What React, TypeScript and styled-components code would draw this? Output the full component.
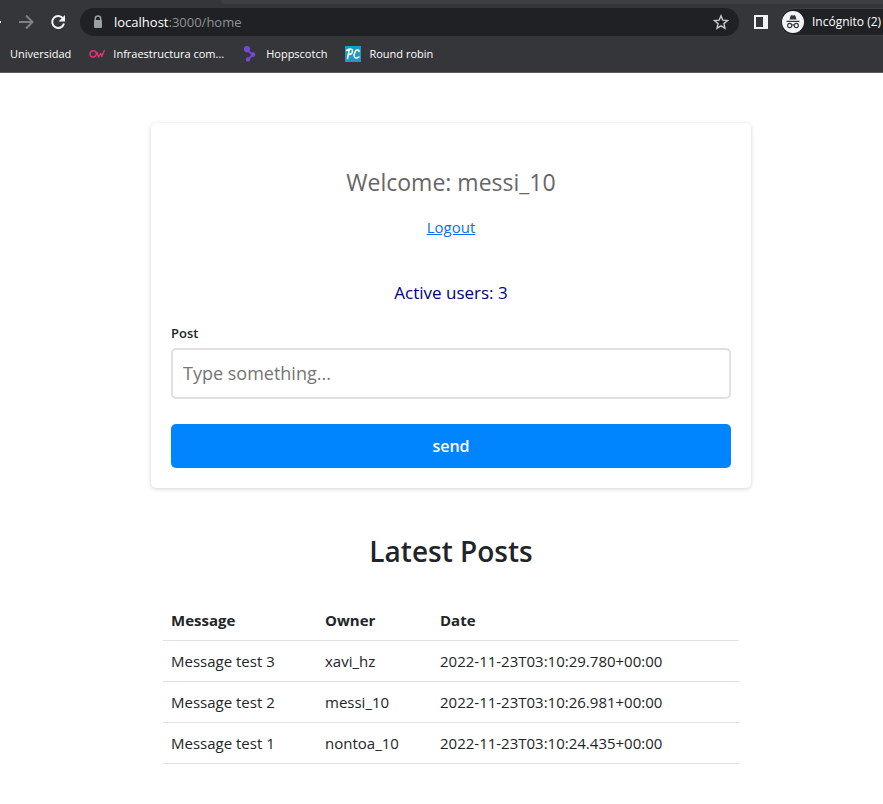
import React from "react";
import styled, { createGlobalStyle } from "styled-components";

const uiFont = `"Segoe UI", "Open Sans", "Noto Sans", sans-serif`;

const GlobalStyle = createGlobalStyle`
  *, *::before, *::after { box-sizing: border-box; }
  body {
    margin: 0;
    background: #fff;
    color: #212529;
    font-family: ${uiFont};
    font-size: 15px;
    line-height: 24px;
    overflow-x: hidden;
  }
`;

/* ---------- browser chrome ---------- */

const Chrome = styled.header`
  background: #35363a;
  border-bottom: 1px solid #5c5d60;
  overflow: hidden;
`;

const TabStrip = styled.div`
  height: 4px;
  margin-left: 221px;
  background: #3c4043;
  border-bottom-left-radius: 4px;
`;

const Toolbar = styled.div`
  display: flex;
  align-items: center;
  height: 36px;
`;

const IconButton = styled.button<{ $w: number; $color?: string }>`
  display: flex;
  flex: none;
  align-items: center;
  justify-content: center;
  width: ${(p) => p.$w}px;
  height: 28px;
  padding: 0;
  border: 0;
  background: none;
  color: ${(p) => p.$color ?? "#f1f3f4"};
`;

const BackButton = styled(IconButton)`
  justify-content: flex-end;
  margin-right: 9px;
  overflow: hidden;
`;

const AddressBar = styled.div`
  display: flex;
  flex: 1;
  align-items: center;
  min-width: 0;
  height: 28px;
  margin: 0 8px 0 6px;
  padding: 0 4px 0 11px;
  border-radius: 14px;
  background: #202124;
`;

const Url = styled.span`
  flex: 1;
  margin-left: 9px;
  color: #8f9296;
  font-size: 13px;
  line-height: 20px;
  white-space: nowrap;
`;

const Host = styled.span`
  color: #fff;
`;

const Profile = styled.button`
  display: flex;
  flex: none;
  align-items: center;
  gap: 8px;
  width: 103px;
  height: 28px;
  margin-left: 5px;
  padding: 0 0 0 1px;
  border: 1px solid #3f4043;
  border-right: 0;
  border-radius: 14px 0 0 14px;
  background: #202124;
  color: #fff;
  font-family: ${uiFont};
  font-size: 12px;
  line-height: 16px;
  white-space: nowrap;
`;

const Bookmarks = styled.nav`
  display: flex;
  align-items: center;
  gap: 18px;
  height: 32px;
  padding: 0 10px 4px;
`;

const Bookmark = styled.a`
  display: flex;
  align-items: center;
  gap: 8px;
  color: #fff;
  font-size: 11px;
  line-height: 16px;
  text-decoration: none;
  white-space: nowrap;
`;

/* ---------- page ---------- */

const Page = styled.main`
  display: flex;
  flex-direction: column;
  align-items: center;
  padding: 50px 0 40px 19px;
`;

const Card = styled.section`
  display: flex;
  flex-direction: column;
  align-items: center;
  width: 100%;
  max-width: 600px;
  padding: 44px 20px 20px;
  border-radius: 5px;
  background: #fff;
  box-shadow: 0 1px 4px rgba(0, 0, 0, 0.18);
`;

const Welcome = styled.h1`
  margin: 0;
  color: #666;
  font-size: 23px;
  font-weight: 400;
  line-height: 30px;
`;

const Logout = styled.a`
  margin-top: 18px;
  color: #0d6efd;
  text-decoration: underline;
`;

const ActiveUsers = styled.p`
  margin: 41px 0 0;
  color: #000080;
  font-size: 17px;
  line-height: 26px;
`;

const PostForm = styled.form`
  display: flex;
  flex-direction: column;
  width: 100%;
  margin-top: 16px;
`;

const Label = styled.label`
  font-size: 13px;
  font-weight: 600;
  line-height: 22px;
`;

const PostInput = styled.input`
  width: 100%;
  height: 51px;
  margin-top: 4px;
  padding: 0 10px 2px;
  border: 2px solid #e0e0e0;
  border-radius: 5px;
  background: #fff;
  color: #212529;
  font-family: "Open Sans", "Noto Sans", sans-serif;
  font-size: 18px;
  &::placeholder { color: #757575; }
`;

const SendButton = styled.button`
  height: 44px;
  margin-top: 25px;
  border: 0;
  border-radius: 5px;
  background: #0085ff;
  color: #fff;
  font-family: ${uiFont};
  font-size: 16px;
  font-weight: 600;
`;

const Posts = styled.section`
  width: 100%;
  max-width: 600px;
  padding: 44px 12px 0;
`;

const PostsTitle = styled.h2`
  margin: 0;
  font-size: 28px;
  font-weight: 600;
  line-height: 38px;
  text-align: center;
`;

const Table = styled.table`
  width: 100%;
  margin-top: 30px;
  border-collapse: collapse;
  table-layout: fixed;
`;

const cell = `
  padding: 8px;
  border-bottom: 1px solid #dee2e6;
  text-align: left;
  white-space: nowrap;
`;

const HeadCell = styled.th<{ $w?: number }>`
  ${cell}
  width: ${(p) => (p.$w ? `${p.$w}px` : "auto")};
  font-weight: 700;
`;

const Cell = styled.td`
  ${cell}
`;

const posts = [
  { message: "Message test 3", owner: "xavi_hz", date: "2022-11-23T03:10:29.780+00:00" },
  { message: "Message test 2", owner: "messi_10", date: "2022-11-23T03:10:26.981+00:00" },
  { message: "Message test 1", owner: "nontoa_10", date: "2022-11-23T03:10:24.435+00:00" },
];

const ForwardIcon = () => (
  <svg width="16" height="16" viewBox="0 0 16 16" fill="none" stroke="currentColor" strokeWidth="2">
    <path d="M1 8h13M8 1.5L14.5 8L8 14.5" />
  </svg>
);

const ReloadIcon = () => (
  <svg width="16" height="16" viewBox="0 0 16 16">
    <path d="M13.2 4.6A6 6 0 1 0 14 9.6" fill="none" stroke="currentColor" strokeWidth="2" />
    <path d="M15 1v6.5H8.5z" fill="currentColor" />
  </svg>
);

const LockIcon = () => (
  <svg width="14" height="14" viewBox="0 0 14 14">
    <path d="M4.3 6V3.8a2.7 2.7 0 0 1 5.4 0V6" fill="none" stroke="#9aa0a6" strokeWidth="1.5" />
    <rect x="3" y="5" width="8" height="8" rx="1" fill="#9aa0a6" />
  </svg>
);

const StarIcon = () => (
  <svg width="16" height="16" viewBox="0 0 16 16" fill="none" stroke="#c6c8ca" strokeWidth="1.4">
    <path d="M8 1.8l1.8 4.3 4.7.4-3.6 3.1 1.1 4.6L8 11.8l-4 2.4 1.1-4.6L1.5 6.5l4.7-.4z" />
  </svg>
);

const PanelIcon = () => (
  <svg width="14" height="14" viewBox="0 0 14 14">
    <path d="M0 0h14v14H0zM2 2v10h7V2z" fill="currentColor" fillRule="evenodd" />
  </svg>
);

const IncognitoIcon = () => (
  <svg width="22" height="22" viewBox="0 0 22 22">
    <circle cx="11" cy="11" r="11" fill="#f1f3f4" />
    <path d="M7.5 8.5L8.6 4.8q.3-.8 1.1-.6l1.3.3 1.3-.3q.8-.2 1.1.6l1.1 3.7z" fill="#35363a" />
    <path d="M4.500 10.400h13" stroke="#35363a" strokeWidth="1.2" />
    <g fill="none" stroke="#35363a" strokeWidth="1.1">
      <circle cx="7.7" cy="14.5" r="2.1" />
      <circle cx="14.3" cy="14.5" r="2.1" />
      <path d="M9.8 14.2q1.2-.8 2.4 0" />
    </g>
  </svg>
);

const CwIcon = () => (
  <svg width="16" height="16" viewBox="0 0 16 16" fill="none" stroke="#e5307a" strokeWidth="1.4" strokeLinecap="round" strokeLinejoin="round">
    <path d="M6.8 6C5.2 4 1 4.600 1 8s4.200 4 5.600 1.600L8 6.300l1.400 4.700 2.400-3.600 1 3.200L15.300 4.500" />
  </svg>
);

const HoppscotchIcon = () => (
  <svg width="16" height="16" viewBox="0 0 16 16" fill="#7547dc">
    <circle cx="5" cy="3.200" r="3.100" />
    <circle cx="11" cy="8.600" r="2.300" />
    <circle cx="6" cy="13.500" r="2.200" />
    <path d="M5 4l6 4.600L6 13.500" fill="none" stroke="#7547dc" strokeWidth="1.800" />
  </svg>
);

const PcIcon = () => (
  <svg width="16" height="16" viewBox="0 0 16 16">
    <rect width="16" height="16" fill="#1f9bbd" />
    <g fill="none" stroke="#fff" strokeWidth="1.5" strokeLinecap="round">
      <path d="M1.500 4.500Q7.500 1.500 7.500 5T3.500 8.500M4.200 4L2.500 12.500" />
      <path d="M14 5.500Q14 3.500 12 4T9 9.500Q9.500 13.500 14 11" />
    </g>
  </svg>
);

const bookmarks = [
  { label: "Universidad", icon: null },
  { label: "Infraestructura com...", icon: <CwIcon /> },
  { label: "Hoppscotch", icon: <HoppscotchIcon /> },
  { label: "Round robin", icon: <PcIcon /> },
];

export default function App() {
  return (
    <>
      <GlobalStyle />
      <Chrome>
        <TabStrip />
        <Toolbar>
          <BackButton $w={1} aria-label="Back">
            <svg width="1" height="2" viewBox="0 0 1 2"><path d="M0 0h1v2H0z" fill="currentColor" /></svg>
          </BackButton>
          <IconButton $w={32} $color="#7f8185" aria-label="Forward"><ForwardIcon /></IconButton>
          <IconButton $w={32} aria-label="Reload"><ReloadIcon /></IconButton>
          <AddressBar>
            <LockIcon />
            <Url><Host>localhost</Host>:3000/home</Url>
            <IconButton $w={28} aria-label="Bookmark this page"><StarIcon /></IconButton>
          </AddressBar>
          <IconButton $w={28} aria-label="Side panel"><PanelIcon /></IconButton>
          <Profile><IncognitoIcon />Incógnito (2)</Profile>
        </Toolbar>
        <Bookmarks>
          {bookmarks.map((b) => (
            <Bookmark key={b.label} href="#">{b.icon}{b.label}</Bookmark>
          ))}
        </Bookmarks>
      </Chrome>
      <Page>
        <Card>
          <Welcome>Welcome: messi_10</Welcome>
          <Logout href="#">Logout</Logout>
          <ActiveUsers>Active users: 3</ActiveUsers>
          <PostForm onSubmit={(e) => e.preventDefault()}>
            <Label htmlFor="post">Post</Label>
            <PostInput id="post" type="text" placeholder="Type something..." />
            <SendButton type="submit">send</SendButton>
          </PostForm>
        </Card>
        <Posts>
          <PostsTitle>Latest Posts</PostsTitle>
          <Table>
            <thead>
              <tr>
                <HeadCell $w={154}>Message</HeadCell>
                <HeadCell $w={115}>Owner</HeadCell>
                <HeadCell>Date</HeadCell>
              </tr>
            </thead>
            <tbody>
              {posts.map((p) => (
                <tr key={p.date}>
                  <Cell>{p.message}</Cell>
                  <Cell>{p.owner}</Cell>
                  <Cell>{p.date}</Cell>
                </tr>
              ))}
            </tbody>
          </Table>
        </Posts>
      </Page>
    </>
  );
}
